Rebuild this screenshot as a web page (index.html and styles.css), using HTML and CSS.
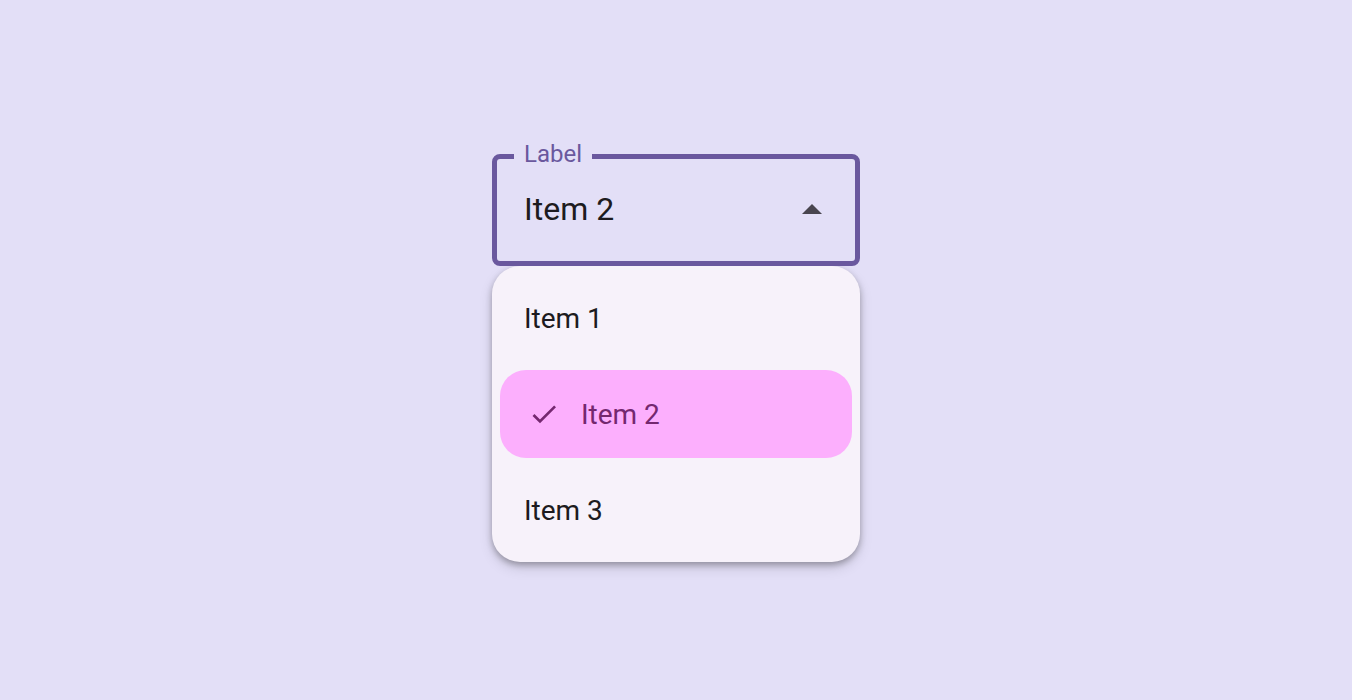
FILE: index.html
```html
<!DOCTYPE html>
<html>
<head>
    <meta charset="UTF-8">
    <meta name="viewport" content="width=device-width, initial-scale=1.0">
    <title>Select menu</title>
    <link rel="stylesheet" href="styles.css">
</head>
<body>
    <div class="page">
        <div class="select">
            <div class="field">
                <span class="field-label">Label</span>
                <span class="field-value">Item 2</span>
                <svg class="arrow" width="20" height="10" viewBox="0 0 20 10">
                    <polygon points="0,10 10,0 20,10" fill="#49454f"/>
                </svg>
            </div>

            <ul class="menu">
                <li class="menu-item">Item 1</li>
                <li class="menu-item selected">
                    <svg class="check" width="32" height="32" viewBox="0 0 24 24">
                        <path d="M9 16.17L4.83 12l-1.42 1.41L9 19 21 7l-1.41-1.41z" fill="currentColor"/>
                    </svg>
                    <span>Item 2</span>
                </li>
                <li class="menu-item">Item 3</li>
            </ul>
        </div>
    </div>
</body>
</html>
```

FILE: styles.css
```css
body {
    margin: 0;
    background-color: #e3dff7;
    font-family: Roboto, "Noto Sans", Arial, sans-serif;
    color: #1d1b20;
}
.page {
    display: flex;
    justify-content: center;
    padding-top: 154px;
    height: 700px;
    box-sizing: border-box;
}
.select {
    width: 368px;
}
.field {
    position: relative;
    height: 112px;
    box-sizing: border-box;
    border: 5px solid #6a589e;
    border-radius: 8px;
    display: flex;
    align-items: center;
    justify-content: space-between;
    padding: 0 33px 2px 27px;
}
.field-label {
    position: absolute;
    top: -19px;
    left: 17px;
    padding: 0 10px;
    background-color: #e3dff7;
    color: #6a589e;
    font-size: 24px;
    line-height: 28px;
}
.field-value {
    font-size: 32px;
    line-height: 40px;
}
.arrow {
    display: block;
}
.menu {
    list-style: none;
    margin: 0;
    padding: 8px 8px;
    background-color: #f7f2fa;
    border-radius: 28px;
    box-shadow: 0 3px 6px rgba(0,0,0,0.28), 0 6px 14px rgba(0,0,0,0.12);
    display: flex;
    flex-direction: column;
    gap: 8px;
}
.menu-item {
    height: 88px;
    display: flex;
    align-items: center;
    padding: 0 24px;
    font-size: 28px;
    border-radius: 26px;
}
.menu-item.selected {
    background-color: #fcaffd;
    color: #74276f;
    padding-left: 28px;
    gap: 21px;
}
.check {
    display: block;
}
```
